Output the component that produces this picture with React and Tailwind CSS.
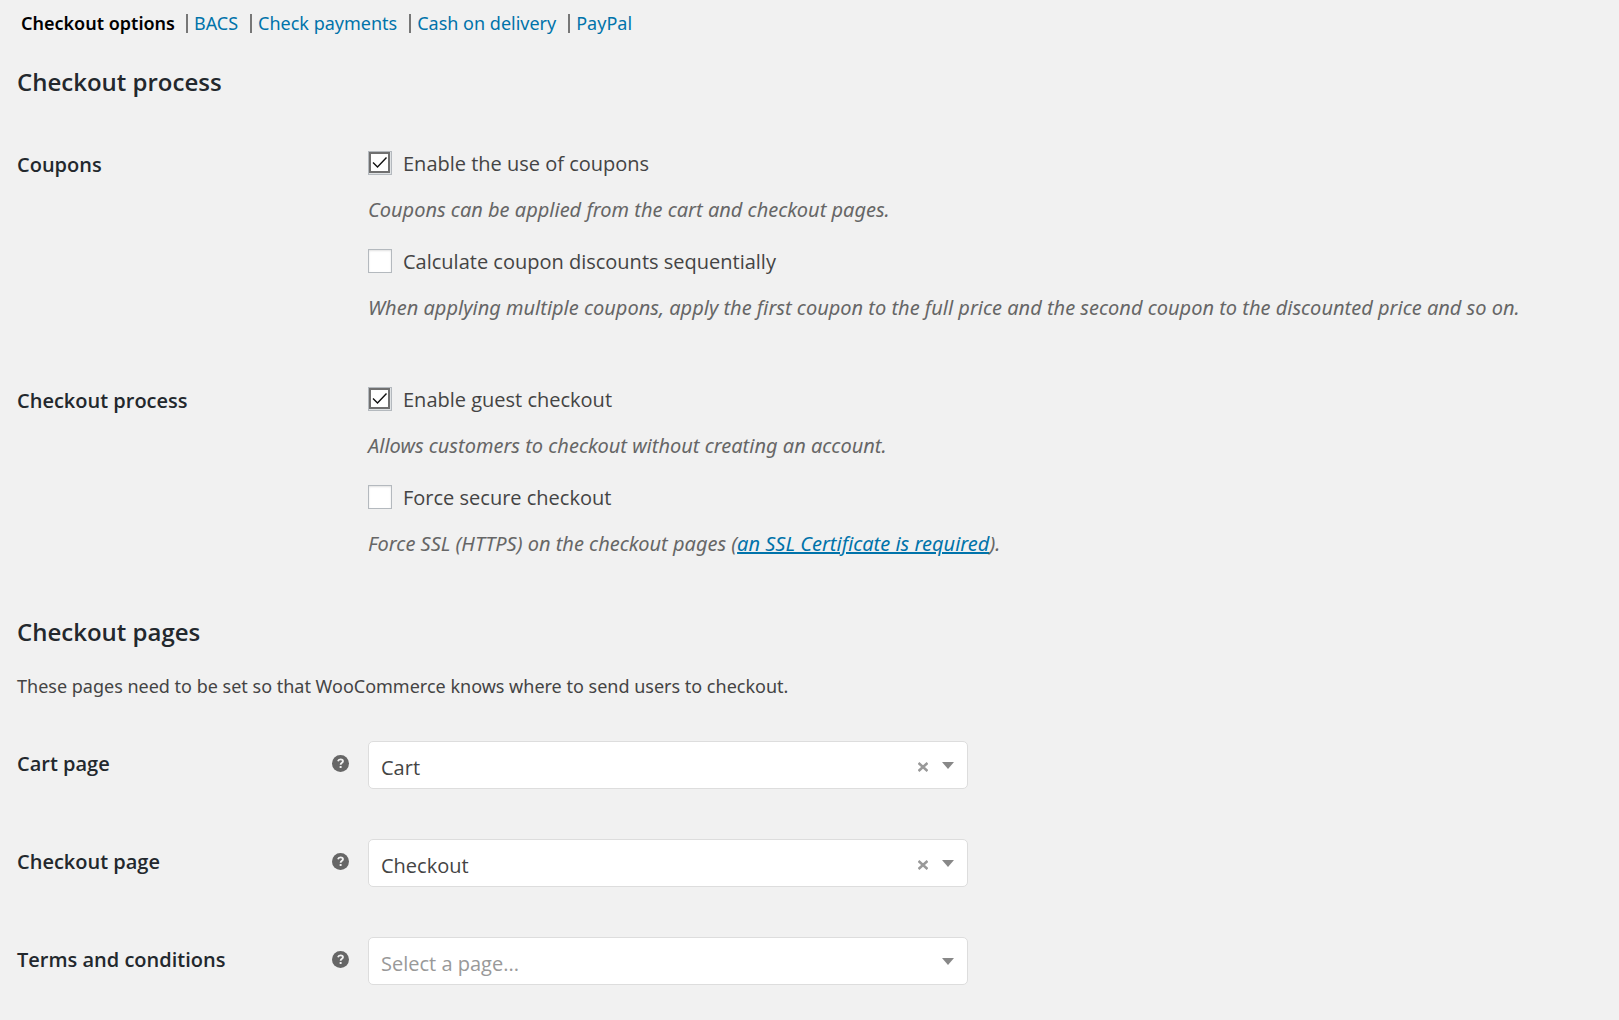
import { useState } from 'react';

const gateways = ['BACS', 'Check payments', 'Cash on delivery', 'PayPal'];

function CheckOption({ id, label, defaultChecked = false, children }) {
  const [checked, setChecked] = useState(defaultChecked);
  return (
    <div>
      <div className="flex items-start gap-[11px]">
        <span className="mt-1 grid size-6 shrink-0">
          <input
            id={id}
            type="checkbox"
            checked={checked}
            onChange={(e) => setChecked(e.target.checked)}
            aria-describedby={`${id}-help`}
            className="col-start-1 row-start-1 size-6 appearance-none border border-[#b4b9be] bg-white shadow-[inset_0_1px_2px_rgba(0,0,0,0.12)]"
          />
          {checked && (
            <svg viewBox="0 0 24 24" className="pointer-events-none col-start-1 row-start-1 size-6" fill="none" aria-hidden="true">
              <path d="M1 22.5H23M22.5 1V23" stroke="#dfe2e4" />
              <rect x="2" y="2" width="19" height="19" stroke="#707070" strokeWidth="2" />
              <path d="M5 11.5L9.5 16L18.5 6.5" stroke="#111" strokeWidth="1.4" />
            </svg>
          )}
        </span>
        <label htmlFor={id} className="text-[20px] leading-[34px] text-[#444]">{label}</label>
      </div>
      <p id={`${id}-help`} className="mt-[15px] font-['Noto_Sans','Open_Sans',sans-serif] text-[20px] leading-7 text-[#666] italic">{children}</p>
    </div>
  );
}

function OptionRow({ title, children }) {
  return (
    <fieldset className="grid grid-cols-[351px_1fr]">
      <legend className="float-left w-[351px] text-[20px] leading-9 font-semibold text-[#23282d]">{title}</legend>
      <div className="col-start-2 flex flex-col gap-[21px]">{children}</div>
    </fieldset>
  );
}

function PageRow({ id, title, value, placeholder }) {
  const [page, setPage] = useState(value);
  return (
    <div className="grid grid-cols-[315px_36px_1fr] items-center">
      <label htmlFor={id} className="pb-[2px] text-[20px] leading-8 font-semibold text-[#23282d]">{title}</label>
      <button type="button" aria-label={`Help for ${title}`} className="flex pb-1">
        <svg viewBox="0 0 17 17" className="size-[17px]" fill="none" aria-hidden="true">
          <circle cx="8.5" cy="8.5" r="8.5" fill="#666" />
          <path d="M6 6.2C6.3 4.9 7.2 4.3 8.5 4.3C10 4.3 11 5 11 6.2C11 7.8 8.6 7.8 8.6 9.8" stroke="#f1f1f1" strokeWidth="1.8" />
          <rect x="7.6" y="11.1" width="2" height="2" rx="0.5" fill="#f1f1f1" />
        </svg>
      </button>
      <div className="grid w-full max-w-[600px] grid-cols-[1fr_auto] items-center">
        <select
          id={id}
          value={page}
          onChange={(e) => setPage(e.target.value)}
          className={`col-span-2 col-start-1 row-start-1 h-12 w-full appearance-none rounded-[5px] border border-[#ddd] bg-white pt-[6px] pr-16 pl-3 text-[20px] ${page ? 'text-[#444]' : 'text-[#999]'}`}
        >
          <option value="">{placeholder}</option>
          <option value="Cart">Cart</option>
          <option value="Checkout">Checkout</option>
        </select>
        <div className="pointer-events-none col-start-2 row-start-1 flex items-center gap-[14px] pr-[14px]">
          {page && (
            <button type="button" aria-label="Clear selection" onClick={() => setPage('')} className="pointer-events-auto mt-1">
              <svg viewBox="0 0 10 10" className="size-[10px]" fill="none" aria-hidden="true">
                <path d="M0.5 1L9.5 9M9.5 1L0.5 9" stroke="#999" strokeWidth="2.6" />
              </svg>
            </button>
          )}
          <svg viewBox="0 0 12 7" className="h-[7px] w-3" fill="#888" aria-hidden="true">
            <path d="M0 0H12L6 7Z" />
          </svg>
        </div>
      </div>
    </div>
  );
}

export default function App() {
  return (
    <main className="min-h-screen bg-[#f1f1f1] pr-5 pb-8 pl-[17px] font-['Open_Sans','Noto_Sans',sans-serif] text-[#444]">
      <nav aria-label="Checkout sections" className="pt-[7px] pl-1 font-['Noto_Sans','Open_Sans',sans-serif]">
        <ul className="flex text-[18px] leading-8">
          <li className="pr-[11px]">
            <a href="#options" aria-current="page" className="font-semibold text-black">Checkout options</a>
          </li>
          {gateways.map((name) => (
            <li key={name} className="flex items-center gap-[6px] pr-3">
              <span className="h-[19px] w-[2px] bg-[#777]" aria-hidden="true" />
              <a href={`#${name}`} className="text-[#0073aa]">{name}</a>
            </li>
          ))}
        </ul>
      </nav>

      <h2 className="mt-[25px] text-[24px] leading-9 font-semibold text-[#23282d]">Checkout process</h2>
      <div className="mt-[47px] flex flex-col gap-[61px]">
        <OptionRow title="Coupons">
          <CheckOption id="coupons" label="Enable the use of coupons" defaultChecked>
            Coupons can be applied from the cart and checkout pages.
          </CheckOption>
          <CheckOption id="sequential" label="Calculate coupon discounts sequentially">
            When applying multiple coupons, apply the first coupon to the full price and the second coupon to the discounted price and so on.
          </CheckOption>
        </OptionRow>
        <OptionRow title="Checkout process">
          <CheckOption id="guest" label="Enable guest checkout" defaultChecked>
            Allows customers to checkout without creating an account.
          </CheckOption>
          <CheckOption id="secure" label="Force secure checkout">
            Force SSL (HTTPS) on the checkout pages (<a href="#ssl" className="text-[#0073aa] underline">an SSL Certificate is required</a>).
          </CheckOption>
        </OptionRow>
      </div>

      <h2 className="mt-14 text-[24px] leading-9 font-semibold text-[#23282d]">Checkout pages</h2>
      <p className="mt-5 font-['Noto_Sans','Open_Sans',sans-serif] text-[18px] leading-8">
        These pages need to be set so that WooCommerce knows where to send users to checkout.
      </p>
      <div className="mt-[39px] flex flex-col gap-[50px]">
        <PageRow id="cart-page" title="Cart page" value="Cart" placeholder="Select a page..." />
        <PageRow id="checkout-page" title="Checkout page" value="Checkout" placeholder="Select a page..." />
        <PageRow id="terms-page" title="Terms and conditions" value="" placeholder="Select a page..." />
      </div>
    </main>
  );
}
